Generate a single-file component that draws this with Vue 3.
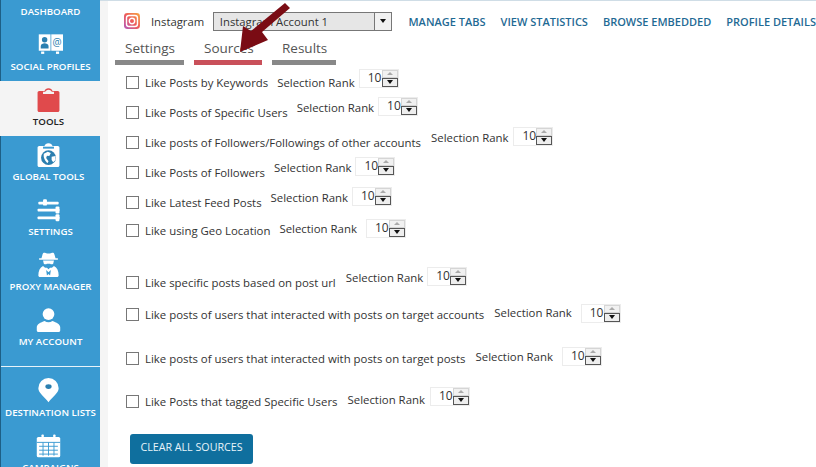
<script setup>
const navTop = [
  { label: 'DASHBOARD', icon: '', cls: 'first' },
  { label: 'SOCIAL PROFILES', icon: 'profiles' },
  { label: 'TOOLS', icon: 'tools', active: true, left: true },
  { label: 'GLOBAL TOOLS', icon: 'global', left: true },
  { label: 'SETTINGS', icon: 'settings' },
  { label: 'PROXY MANAGER', icon: 'proxy' },
  { label: 'MY ACCOUNT', icon: 'account' }
]
const navBottom = [
  { label: 'DESTINATION LISTS', icon: 'pin' },
  { label: 'CAMPAIGNS', icon: 'calendar' }
]
const rows = [
  { text: 'Like Posts by Keywords', mt: 0, gap: 9, rankGap: 4, lift: 0, spin: 8 },
  { text: 'Like Posts of Specific Users', mt: 6, gap: 9, rankGap: 4, lift: 10, spin: 12 },
  { text: 'Like posts of Followers/Followings of other accounts', mt: 6, gap: 10, rankGap: 5, lift: 10, spin: 12 },
  { text: 'Like Posts of Followers', mt: 6, gap: 9, rankGap: 4, lift: 10, spin: 12 },
  { text: 'Like Latest Feed Posts', mt: 6, gap: 9, rankGap: 4, lift: 10, spin: 12 },
  { text: 'Like using Geo Location', mt: 4, gap: 9, rankGap: 9, lift: 4, spin: 4 },
  { text: 'Like specific posts based on post url', mt: 28, gap: 10, rankGap: 4, lift: 10, spin: 12 },
  { text: 'Like posts of users that interacted with posts on target accounts', mt: 8, gap: 10, rankGap: 9, lift: 4, spin: 2 },
  { text: 'Like posts of users that interacted with posts on target posts', mt: 20, gap: 10, rankGap: 9, lift: 4, spin: 4 },
  { text: 'Like Posts that tagged Specific Users', mt: 19, gap: 10, rankGap: 5, lift: 4, spin: 10 }
]
const links = ['MANAGE TABS', 'VIEW STATISTICS', 'BROWSE EMBEDDED', 'PROFILE DETAILS']
</script>

<template>
  <div class="page">
    <aside class="side">
      <div v-for="n in navTop" :key="n.label" class="nav" :class="{ active: n.active, first: n.cls === 'first', left: n.left }">
        <svg v-if="n.icon" class="ico" :class="{ wide: n.icon === 'profiles' }" viewBox="0 0 32 32">
          <g v-if="n.icon === 'profiles'">
            <rect x="1" y="3" width="15" height="21" fill="#fff" />
            <rect x="17" y="3" width="15" height="21" fill="#fff" />
            <rect x="4" y="25" width="4" height="3" fill="#fff" /><rect x="23" y="25" width="4" height="3" fill="#fff" />
            <circle cx="8.500" cy="10" r="3.500" fill="#2b7fb0" />
            <path d="M3.500 21v-3c0-2.500 3-3 5-3.500 2 .5 5 1 5 3.500v3z" fill="#2b7fb0" />
            <text x="24.500" y="18" font-size="13" font-family="Open Sans, sans-serif" text-anchor="middle" fill="#2b7fb0">@</text>
          </g>
          <path v-else-if="n.icon === 'tools'" fill="#e04a4c" d="M4 5h7c0-1.500 2-3.500 5-3.500S21 3.500 21 5h7c1 0 2 1 2 2v23c0 1-1 2-2 2H4c-1 0-2-1-2-2V7c0-1 1-2 2-2zm5 1v3h14V6h-3c0-1-2-2.500-4-2.500S12 5 12 6z" />
          <g v-else-if="n.icon === 'global'">
            <path fill="#fff" d="M4 5h7c0-1.500 2-3.500 5-3.500S21 3.500 21 5h7c1 0 2 1 2 2v23c0 1-1 2-2 2H4c-1 0-2-1-2-2V7c0-1 1-2 2-2z" />
            <rect x="9" y="6" width="14" height="2.500" fill="#3a9ad1" />
            <circle cx="16" cy="20" r="9.500" fill="#2b7fb0" />
            <path fill="#fff" d="M10 15l5-2.500 4 1.500-2 4-3-.5-1 3 3 4-1 2.500c-3-2-6-7-5-12zM20 19l5-1 0 5-3 3-2-3z" />
          </g>
          <g v-else-if="n.icon === 'settings'" fill="#fff">
            <rect x="3" y="6" width="26" height="3.500" rx="1" /><rect x="9" y="3" width="5" height="8" rx="1.500" />
            <rect x="2" y="15" width="28" height="3.500" rx="1" /><rect x="25" y="12" width="5" height="9" rx="1.500" />
            <rect x="2" y="25" width="28" height="3.500" rx="1" /><rect x="25" y="22" width="5" height="9" rx="1.500" />
          </g>
          <g v-else-if="n.icon === 'proxy'" fill="#fff">
            <path d="M10 1c2 0 4 1 6 1s4-1 6-1c1.500 0 2 4 3 7h3v2H4V8h3c1-3 1.500-7 3-7z" />
            <path d="M9 11h14l-1 4c-1 1-3 1-4 0h-4c-1 1-3 1-4 0z" />
            <path fill-rule="evenodd" d="M5 32c-1 0-2-1-2-2 0-6 2-10 6-12 1 1 2 2 3 2l2 0 2 2 2-2 2 0c1 0 2-1 3-2 4 2 6 6 6 12 0 1-1 2-2 2zM13 23l1 7 2-2 2 2 1-7-3 3z" />
          </g>
          <g v-else-if="n.icon === 'account'" fill="#fff">
            <circle cx="16" cy="9" r="7.500" />
            <path d="M3 32c-1 0-2-1-2-2v-4c0-4 5-6 10-8 3 2 7 2 10 0 5 2 10 4 10 8v4c0 1-1 2-2 2z" />
          </g>
        </svg>
        <span class="nav-label">{{ n.label }}</span>
      </div>
      <div class="rule"></div>
      <div v-for="n in navBottom" :key="n.label" class="nav">
        <svg class="ico" viewBox="0 0 32 32">
          <g v-if="n.icon === 'pin'">
            <path fill="#fff" d="M16 31C11 24 3 19 3 13a13 13 0 0 1 26 0c0 6-8 11-13 18z" />
            <ellipse cx="16" cy="11" rx="4" ry="3" fill="#2b7fb0" />
          </g>
          <g v-else>
            <rect x="1" y="5" width="30" height="26" rx="2" fill="#fff" />
            <rect x="7" y="2" width="3" height="6" rx="1" fill="#fff" /><rect x="22" y="2" width="3" height="6" rx="1" fill="#fff" />
            <path d="M1 12h30M4 17h24M4 22h24M4 27h24M9 12v17M16 12v17M23 12v17" stroke="#3a9ad1" stroke-width="1.200" fill="none" />
          </g>
        </svg>
        <span class="nav-label">{{ n.label }}</span>
      </div>
    </aside>

    <main class="main">
      <header class="head">
        <svg class="ig" viewBox="0 0 16 16">
          <defs>
            <linearGradient id="igg" x1="0" y1="1" x2="1" y2="0">
              <stop offset="0" stop-color="#b05ac0" />
              <stop offset=".5" stop-color="#ee5a5a" />
              <stop offset="1" stop-color="#f7a840" />
            </linearGradient>
          </defs>
          <rect width="16" height="16" rx="3.500" fill="url(#igg)" />
          <rect x="2.500" y="2.500" width="11" height="11" rx="2.500" fill="none" stroke="#fff" stroke-width="1.400" />
          <circle cx="8" cy="8" r="2.700" fill="none" stroke="#fff" stroke-width="1.400" />
        </svg>
        <span class="ig-name">Instagram</span>
        <div class="combo">
          <span class="combo-text">Instagram Account 1</span>
          <span class="combo-btn"><i class="tri"></i></span>
        </div>
        <nav class="links">
          <a v-for="l in links" :key="l">{{ l }}</a>
        </nav>
      </header>

      <div class="tabs">
        <div class="tab tab-a">Settings</div>
        <div class="tab tab-b on">Sources</div>
        <div class="tab tab-c">Results</div>
      </div>

      <div class="list">
        <div v-for="r in rows" :key="r.text" class="row" :style="{ marginTop: r.mt + 'px' }">
          <span class="box"></span>
          <span class="text">{{ r.text }}</span>
          <span class="rank" :style="{ marginLeft: r.gap + 'px', marginBottom: r.lift + 'px' }">Selection Rank</span>
          <span class="spin" :style="{ marginLeft: r.rankGap + 'px', marginBottom: r.spin + 'px' }">
            <span class="num">10</span>
            <span class="arrows">
              <span class="up"><i class="tri-up"></i></span>
              <span class="down"><i class="tri"></i></span>
            </span>
          </span>
        </div>
      </div>

      <button class="clear">CLEAR ALL SOURCES</button>
    </main>

    <svg class="arrow" viewBox="0 0 70 60">
      <path fill="#7a0c14" d="M59 3L64 8 36 32 42 40 14 52 17 26 25 31z" />
    </svg>
  </div>
</template>

<style>
html, body { margin: 0; background: #fff; }
</style>

<style scoped>
.page {
  position: relative;
  display: flex;
  width: 816px;
  height: 467px;
  overflow: hidden;
  background: #fff;
  font-family: "Open Sans", "Noto Sans", sans-serif;
  color: #333;
}
.side {
  flex: 0 0 100px;
  width: 100px;
  background: #3a9ad1;
  border-left: 1px solid #1d5f86;
  box-sizing: border-box;
  box-shadow: 8px 0 0 #f5f5f5;
}
.nav {
  height: 55px;
  display: flex;
  flex-direction: column;
  align-items: center;
  justify-content: flex-end;
  color: #fff;
  padding-bottom: 7px;
  box-sizing: border-box;
}
.nav.first { height: 26px; }
.nav.active { background: #f4f4f4; color: #222; margin-left: -1px; padding-left: 1px; }
.nav.left .nav-label { margin-right: 4px; }
.ico { width: 25px; height: 25px; margin-bottom: 3px; margin-right: 5px; }
.ico.wide { margin-right: 0; }
.nav-label {
  font-size: 9.700px;
  font-weight: 600;
  line-height: 14px;
  white-space: nowrap;
}
.rule { height: 1px; background: #e8f3fa; margin-top: 10px; margin-bottom: 5px; }

.main {
  flex: 1;
  padding-left: 26px;
  min-width: 0;
  border-top: 1px solid #cfdde6;
  display: flex;
  flex-direction: column;
}
.head { display: flex; align-items: center; height: 30px; margin-top: 5px; margin-left: -2px; }
.ig { width: 16px; height: 16px; }
.ig-name { margin-left: 11px; font-size: 11.300px; width: 62px; }
.combo {
  width: 180px;
  height: 19px;
  box-sizing: border-box;
  border: 1px solid #777;
  background: #e6e6e6;
  display: flex;
  align-items: center;
  font-size: 11.300px;
}
.combo-text { flex: 1; padding-left: 6px; }
.combo-btn {
  width: 16px;
  height: 100%;
  background: #f1f1f1;
  border-left: 1px solid #777;
  display: flex;
  align-items: center;
  justify-content: center;
}
.tri { width: 0; height: 0; border: 3.500px solid transparent; border-top: 4px solid #111; border-bottom: 0; display: block; }
.tri-up { width: 0; height: 0; border: 3.500px solid transparent; border-bottom: 3px solid #aaa; border-top: 0; display: block; }
.links { display: flex; gap: 15px; margin-left: 16px; white-space: nowrap; }
.links a { font-size: 11px; font-weight: 600; color: #1f6a94; }

.tabs { display: flex; margin-left: -11px; margin-top: 2px; }
.tab { font-size: 13.500px; color: #555; height: 27px; line-height: 20px; padding: 0 0 0 10px; box-sizing: border-box; border-bottom: 5px solid #888; margin-right: 10px; }
.tab-a { width: 69px; }
.tab-b { width: 68px; }
.tab-c { width: 64px; }
.tab.on { border-bottom-color: #c9505a; }

.list { margin-top: 5px; }
.row { display: flex; align-items: center; height: 24px; font-size: 11.400px; white-space: nowrap; box-sizing: border-box; }
.box { width: 13px; height: 13px; border: 1px solid #777; box-sizing: border-box; background: #fff; flex: none; margin-right: 6px; }
.spin { display: flex; width: 40px; height: 19px; border: 1px solid #ececec; box-sizing: border-box; background: #fff; flex: none; }
.num { flex: 1; font-size: 12px; line-height: 15px; padding-left: 8px; color: #333; }
.arrows { width: 16px; display: flex; flex-direction: column; }
.up { flex: 1; background: #f1f1f1; border: 1px solid #d5d5d5; display: flex; align-items: center; justify-content: center; box-sizing: border-box; }
.down { flex: 1; background: #eee; border: 1px solid #555; display: flex; align-items: center; justify-content: center; box-sizing: border-box; }
.clear {
  width: 123px;
  height: 30px;
  margin-top: 21px;
  margin-left: 4px;
  padding: 0 0 4px;
  border: 0;
  border-radius: 3px;
  background: #0f6f9e;
  color: #e8f4fa;
  font: 400 10.700px "Open Sans", sans-serif;
}
.arrow { position: absolute; left: 226px; top: 0; width: 70px; height: 60px; }
</style>
